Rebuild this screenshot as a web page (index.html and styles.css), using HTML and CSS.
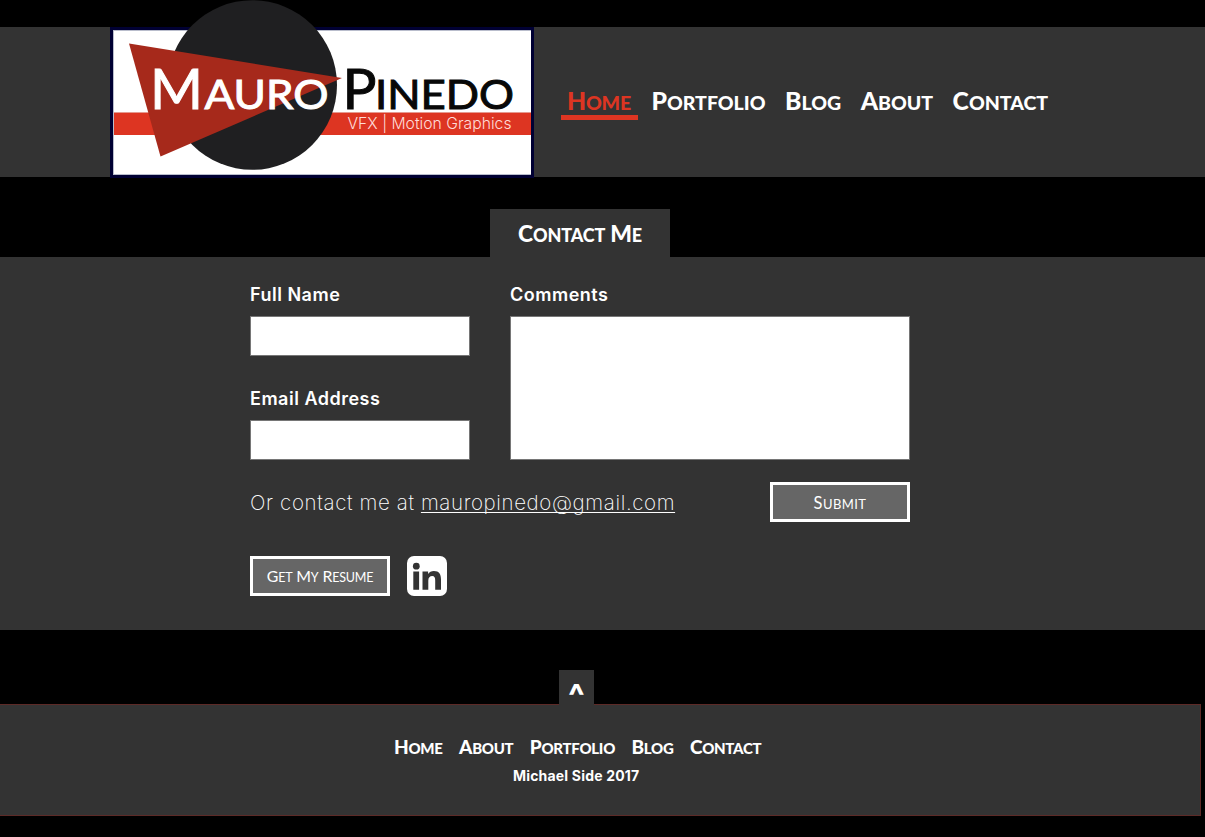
FILE: index.html
```html
<!DOCTYPE html>
<html lang="en">
<head>
<meta charset="utf-8">
<title>Mauro Pinedo</title>
<link rel="stylesheet" href="styles.css">
</head>
<body>
<header class="header">
  <a class="logo" href="#">
    <svg width="424" height="178" viewBox="110 0 424 178">
      <rect x="110" y="27" width="424" height="151" fill="#000033"/>
      <rect x="113" y="30" width="418" height="145" fill="#b9bdcc"/>
      <rect x="114" y="31" width="417" height="143" fill="#fff"/>
      <rect x="114" y="112" width="417" height="1" fill="#e59a90"/>
      <rect x="114" y="113" width="417" height="22" fill="#dd3522"/>
      <ellipse cx="252.3" cy="85" rx="84.7" ry="84.8" fill="#1f1f21"/>
      <path d="M129 43.5L342 78L160.500 156.500Z" fill="#a6291b"/>
      <g class="logo-name">
        <g fill="#fff" stroke="#fff">
          <text x="150" y="108.500" font-size="56" textLength="53" lengthAdjust="spacingAndGlyphs">M</text>
          <text x="204.500" y="108.500" font-size="41" textLength="124" lengthAdjust="spacingAndGlyphs">AURO</text>
        </g>
        <g fill="#080808" stroke="#080808">
          <text x="342.500" y="108.500" font-size="56" textLength="34" lengthAdjust="spacingAndGlyphs">P</text>
          <text x="375" y="108.500" font-size="41" textLength="139" lengthAdjust="spacingAndGlyphs">INEDO</text>
        </g>
      </g>
      <text class="logo-tag" x="347.500" y="129.300" font-size="16" textLength="164" lengthAdjust="spacingAndGlyphs">VFX | Motion Graphics</text>
    </svg>
  </a>
  <nav class="nav">
    <a class="caps active" href="#">Home</a>
    <a class="caps" href="#">Portfolio</a>
    <a class="caps" href="#">Blog</a>
    <a class="caps" href="#">About</a>
    <a class="caps" href="#">Contact</a>
  </nav>
</header>
<main>
  <h1 class="tab"><span class="caps">Contact</span><span class="caps">Me</span></h1>
  <section class="panel">
    <form class="form">
      <div class="fields">
        <div class="field"><label for="name">Full Name</label><input id="name" type="text"></div>
        <div class="field"><label for="email">Email Address</label><input id="email" type="text"></div>
      </div>
      <div class="field comments"><label for="comments">Comments</label><textarea id="comments"></textarea></div>
    </form>
    <div class="row">
      <p class="direct">Or contact me at <a href="#">mauropinedo@gmail.com</a></p>
      <button class="btn submit"><span class="caps">Submit</span></button>
    </div>
    <div class="links">
      <a class="btn" href="#"><span class="caps">Get</span><span class="caps">My</span><span class="caps">Resume</span></a>
      <a class="linkedin" href="#" aria-label="LinkedIn">
        <svg width="40" height="40" viewBox="0 0 40 40">
          <rect width="40" height="40" rx="7" fill="#fff"/>
          <g fill="#333"><circle cx="9.300" cy="10.200" r="3.400"/><path d="M6.300 15.500h5.800v18.300h-5.800zM15.500 15.500h5.600v2.500c1.200-2 3.200-3 5.800-3 5.300 0 7.100 3.300 7.100 8.500v10.300h-5.800v-9.300c0-2.800-.7-4.500-3-4.500s-3.900 1.500-3.900 4.500v9.300h-5.800z"/></g>
        </svg>
      </a>
    </div>
  </section>
</main>
<footer class="footer">
  <a class="top" href="#" aria-label="Back to top"><span>^</span></a>
  <div class="footer-panel">
    <nav class="footer-nav">
      <a class="caps" href="#">Home</a>
      <a class="caps" href="#">About</a>
      <a class="caps" href="#">Portfolio</a>
      <a class="caps" href="#">Blog</a>
      <a class="caps" href="#">Contact</a>
    </nav>
    <p class="credit">Michael Side 2017</p>
  </div>
</footer>
</body>
</html>
```
FILE: styles.css
```css
* { box-sizing: border-box; }
body { margin: 0; background: #000; color: #fff; font-family: Inter, sans-serif; overflow-x: hidden; }
a { color: inherit; text-decoration: none; }
p, h1 { margin: 0; }

/* Small capitals with a taller initial */
.caps { display: inline-block; font-family: Lato, sans-serif; text-transform: uppercase; }
.caps::first-letter { font-size: 1.27em; }

.header { display: flex; height: 150px; margin-top: 27px; background: #333; }
.logo { display: block; margin: -27px 0 0 110px; height: 178px; }
.logo svg { display: block; position: relative; }
.logo-name { font-family: Lato, sans-serif; stroke-width: 1px; }
.logo-tag { font-family: Inter, sans-serif; font-weight: 300; fill: #ffdcd8; }

.nav { display: flex; gap: 7.5px; margin: 58px 0 0 27px; height: 35px; }
.nav .caps { height: 35px; padding: 0 6px; border-bottom: 5px solid transparent; font-size: 19.5px; font-weight: 900; line-height: 32px; }
.nav .active { color: #dd3522; border-color: #dd3522; letter-spacing: -.2px; padding-right: 7px; }

.tab { display: flex; justify-content: center; gap: 5px; width: 180px; height: 48px; margin: 32px 0 0 490px; background: #333; line-height: 48px; }
.tab .caps { font-size: 18px; font-weight: 900; letter-spacing: -.15px; }

.panel { height: 373px; padding: 27px 0 0 250px; background: #333; }
.form { display: flex; gap: 40px; }
.fields { display: flex; flex-direction: column; gap: 32px; width: 220px; }
.field { display: flex; flex-direction: column; }
.comments { width: 400px; }
label { height: 32px; font-size: 18px; font-weight: 600; line-height: 22px; letter-spacing: .5px; }
input, textarea { width: 100%; height: 40px; margin: 0; padding: 0 8px; border: 1px solid #767676; border-radius: 0; background: #fff; resize: none; }
textarea { height: 144px; }
.row { display: flex; justify-content: space-between; align-items: center; width: 660px; margin-top: 22px; height: 40px; }
.direct { padding-top: 2px; font-size: 20.5px; font-weight: 200; line-height: 42px; letter-spacing: .62px; }
.direct a { text-decoration: underline; text-decoration-thickness: 1px; text-underline-offset: 2px; text-decoration-skip-ink: none; }
.btn { display: flex; justify-content: center; gap: 4px; width: 140px; height: 40px; padding: 0; border: 3px solid #fff; background: #666; color: #fff; line-height: 33px; }
.btn .caps { font-size: 12.5px; letter-spacing: -.2px; }
.submit .caps { padding-top: 2px; font-size: 13px; letter-spacing: .45px; }
.links { display: flex; gap: 17px; margin-top: 34px; }
.linkedin svg { display: block; }

.footer { width: 1201px; margin-top: 40px; }
.top { display: block; position: relative; width: 35px; height: 35px; margin: 0 0 -1px 559px; background: #333; text-align: center; font-size: 34px; font-weight: 800; line-height: 52px; }
.top span { display: block; height: 35px; }
.footer-panel { height: 112px; padding: 28px 49px 0 0; border: 1px solid #5d2a27; border-left: 0; background: #333; }
.footer-nav { display: flex; gap: 16.4px; margin-left: 394px; }
.footer-nav .caps { height: 31px; font-size: 15px; font-weight: 900; line-height: 27px; letter-spacing: -.28px; }
.credit { margin-left: 513px; font-size: 14px; font-weight: 700; line-height: 24px; letter-spacing: .18px; }
```
